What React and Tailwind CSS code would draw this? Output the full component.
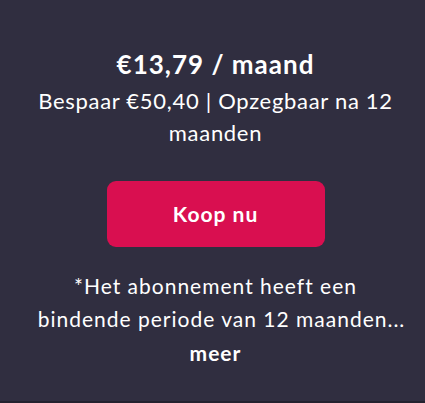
import React from "react";

const App = () => {
  return (
    <div
      className="min-h-[403px] bg-[#302e40] flex flex-col items-center pl-[6px] text-white border-b-2 border-[#24222f]"
      style={{ fontFamily: "Lato, 'Open Sans', sans-serif" }}
    >
      <div className="pt-[48px] w-[370px] text-center">
        <h2 className="text-[26px] font-bold leading-[32px] tracking-[1px]">€13,79 / maand</h2>
        <p className="text-[22px] leading-[32px] mt-[5px] tracking-[0.7px]">
          Bespaar €50,40 | Opzegbaar na 12 maanden
        </p>
      </div>
      <button className="mt-[32px] w-[218px] h-[66px] rounded-[9px] bg-[#d90f50] text-white text-[21px] font-bold tracking-[1px]">
        Koop nu
      </button>
      <div className="mt-[22px] w-full text-center text-[21px] leading-[33px] tracking-[1px]">
        <p className="whitespace-nowrap">*Het abonnement heeft een</p>
        <p className="whitespace-nowrap pl-[12px]">bindende periode van 12 maanden...</p>
        <button className="block mx-auto font-bold leading-[35px]">meer</button>
      </div>
    </div>
  );
};

export default App;
